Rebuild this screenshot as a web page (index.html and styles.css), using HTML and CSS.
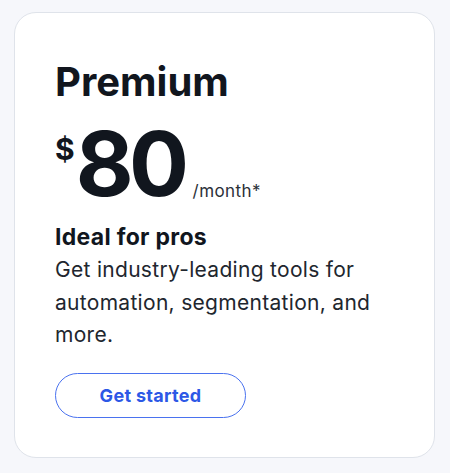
FILE: index.html
```html
<!DOCTYPE html>
<html lang="en">
<head>
<meta charset="utf-8">
<title>Premium</title>
<link rel="stylesheet" href="styles.css">
</head>
<body>
<main class="page">
  <section class="card">
    <h2 class="plan">Premium</h2>
    <div class="price">
      <span class="currency">$</span><span class="amount">80</span><span class="period">/month*</span>
    </div>
    <h3 class="tagline">Ideal for pros</h3>
    <p class="desc">Get industry-leading tools for automation, segmentation, and more.</p>
    <a class="cta" href="#">Get started</a>
  </section>
</main>
</body>
</html>
```
FILE: styles.css
```css
* { box-sizing: border-box; }
html, body { margin: 0; padding: 0; }
body {
  background: #f6f7fb;
  font-family: "Inter", "Liberation Sans", sans-serif;
  color: #11161e;
}
.page {
  padding: 12px 15px 15px 14px;
}
.card {
  background: #ffffff;
  border: 1px solid #dfe3ea;
  border-radius: 22px;
  height: 446px;
  padding: 45px 40px 0 40px;
  display: flex;
  flex-direction: column;
  align-items: flex-start;
}
.plan {
  margin: 0;
  font-size: 40px;
  line-height: 48px;
  font-weight: 700;
}
.price {
  display: flex;
  align-items: flex-start;
  margin-top: 18px;
  height: 80px;
}
.currency {
  font-size: 30px;
  font-weight: 700;
  line-height: 36px;
  margin-top: 7px;
  margin-right: 1px;
}
.amount {
  font-size: 89px;
  font-weight: 700;
  line-height: 80px;
  letter-spacing: -4.5px;
}
.period {
  align-self: flex-end;
  font-size: 17px;
  line-height: 20px;
  color: #2b3038;
  margin-left: 8px;
  margin-bottom: 3px;
  letter-spacing: 0.4px;
}
.tagline {
  margin: 19px 0 0 0;
  font-size: 23px;
  line-height: 28px;
  font-weight: 700;
  letter-spacing: 0.3px;
}
.desc {
  margin: 3px 0 0 0;
  font-size: 21px;
  line-height: 32.5px;
  color: #21262e;
  max-width: 345px;
  letter-spacing: 0.3px;
}
.cta {
  margin-top: 21px;
  width: 191px;
  height: 45px;
  border: 1px solid #4a72ef;
  border-radius: 23px;
  display: flex;
  align-items: center;
  justify-content: center;
  color: #2d58e6;
  font-size: 18px;
  font-weight: 700;
  letter-spacing: 0.3px;
  text-decoration: none;
}
```
